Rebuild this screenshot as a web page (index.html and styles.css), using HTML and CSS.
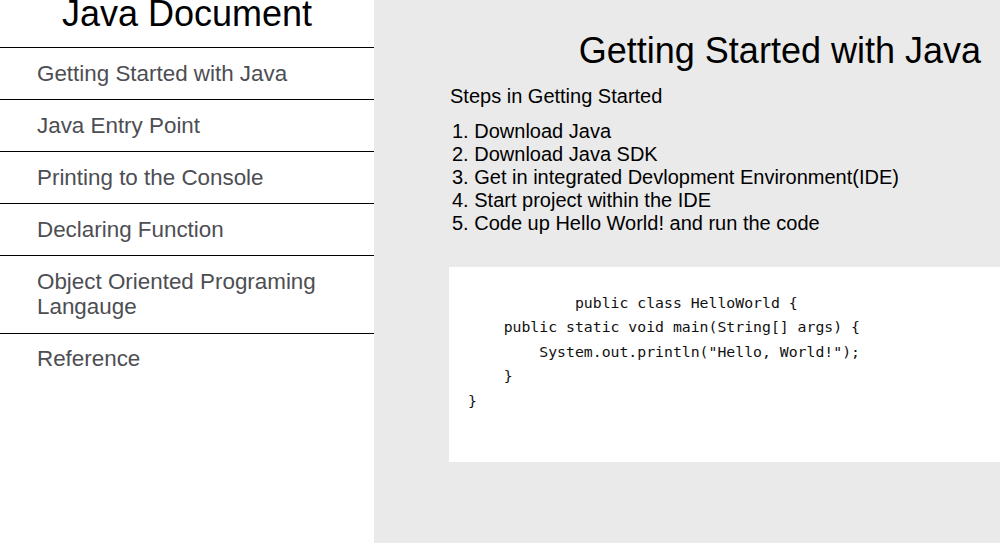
FILE: index.html
```html
<!DOCTYPE html>
<html lang="en">
<head>
<meta charset="utf-8">
<title>Java Document</title>
<link rel="stylesheet" href="styles.css">
</head>
<body>
<div class="page">
  <nav class="navbar">
    <header class="nav-header"><h1 class="nav-title">Java Document</h1></header>
    <ul class="nav-list">
      <li class="nav-item"><a class="nav-link" href="#Getting_Started_with_Java">Getting Started with Java</a></li>
      <li class="nav-item"><a class="nav-link" href="#Java_Entry_Point">Java Entry Point</a></li>
      <li class="nav-item"><a class="nav-link" href="#Printing_to_the_Console">Printing to the Console</a></li>
      <li class="nav-item"><a class="nav-link" href="#Declaring_Function">Declaring Function</a></li>
      <li class="nav-item"><a class="nav-link" href="#Object_Oriented_Programing_Langauge">Object Oriented Programing Langauge</a></li>
      <li class="nav-item"><a class="nav-link" href="#Reference">Reference</a></li>
    </ul>
  </nav>
  <main class="main-doc">
    <section class="main-section" id="Getting_Started_with_Java">
      <h2 class="section-title">Getting Started with Java</h2>
      <p class="section-lead">Steps in Getting Started</p>
      <ol class="steps">
        <li>Download Java</li>
        <li>Download Java SDK</li>
        <li>Get in integrated Devlopment Environment(IDE)</li>
        <li>Start project within the IDE</li>
        <li>Code up Hello World! and run the code</li>
      </ol>
      <div class="code-box"><pre class="code">            public class HelloWorld {
    public static void main(String[] args) {
        System.out.println("Hello, World!");
    }
}</pre></div>
    </section>
  </main>
</div>
</body>
</html>
```
FILE: styles.css
```css
html, body {
  margin: 0;
  padding: 0;
  height: 100%;
}
body {
  font-family: "Liberation Sans", Arial, sans-serif;
  overflow: hidden;
}
.page {
  display: flex;
  height: 543px;
}
.navbar {
  width: 374px;
  flex: 0 0 374px;
  background: #ffffff;
}
.nav-header {
  height: 47px;
  border-bottom: 1px solid #000;
  text-align: center;
}
.nav-title {
  margin: 0;
  font-size: 36px;
  font-weight: normal;
  line-height: 28px;
  color: #000;
}
.nav-list {
  list-style: none;
  margin: 0;
  padding: 0;
}
.nav-item {
  border-bottom: 1px solid #000;
}
.nav-item:last-child {
  border-bottom: none;
}
.nav-link {
  display: block;
  padding: 12.62px 20px 12.62px 37px;
  font-size: 22.4px;
  line-height: 25.76px;
  color: #4d4e53;
  text-decoration: none;
}
.main-doc {
  flex: 1;
  background: #eaeaea;
  min-width: 0;
}
.section-title {
  margin: 30px 19px 0 0;
  font-size: 36px;
  font-weight: normal;
  text-align: right;
  color: #000;
}
.section-lead {
  margin: 13px 0 0 76px;
  font-size: 20px;
  color: #000;
}
.steps {
  margin: 12px 0 0 78px;
  padding: 0;
  list-style-position: inside;
  font-size: 20px;
  color: #000;
}
.code-box {
  margin: 32px 0 0 75px;
  background: #fff;
  height: 195px;
  box-sizing: border-box;
  padding: 24px 0 0 19px;
}
.code {
  margin: 0;
  font-family: "DejaVu Sans Mono", "Liberation Mono", monospace;
  font-size: 14.8px;
  line-height: 24.4px;
  color: #111;
}
```
